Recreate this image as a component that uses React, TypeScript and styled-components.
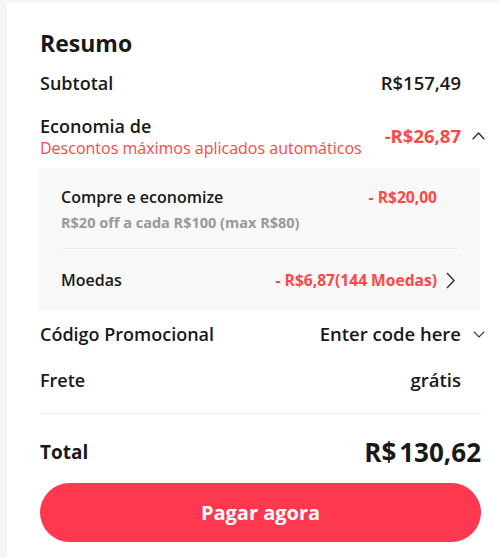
import React from "react";
import styled, { createGlobalStyle } from "styled-components";

const GlobalStyle = createGlobalStyle`
  html, body {
    margin: 0;
    padding: 0;
    background: #f5f5f5;
    font-family: "Open Sans", "Liberation Sans", sans-serif;
    color: #191919;
  }
`;

const Chevron = ({ dir }: { dir: "up" | "down" | "right" }) => {
  if (dir === "right") {
    return (
      <Icon width="9" height="17" viewBox="0 0 9 17">
        <path d="M1 1 L8 8.5 L1 16" fill="none" stroke="#333" strokeWidth="1.4" />
      </Icon>
    );
  }
  if (dir === "up") {
    return (
      <Icon width="13" height="8" viewBox="0 0 13 8">
        <path d="M0.7 7.3 L6.5 1 L12.3 7.3" fill="none" stroke="#333" strokeWidth="1.4" />
      </Icon>
    );
  }
  return (
    <Icon width="12" height="7" viewBox="0 0 12 7">
      <path d="M0.7 0.7 L6 6 L11.3 0.7" fill="none" stroke="#333" strokeWidth="1.2" />
    </Icon>
  );
};

function App() {
  return (
    <>
      <GlobalStyle />
      <Card>
        <Title>Resumo</Title>
        <Row $h={42}>
          <Label>Subtotal</Label>
          <Side>
            <Value>R$157,49</Value>
            <IconSlot />
          </Side>
        </Row>
        <Row $h={64}>
          <div>
            <Label>Economia de</Label>
            <Note>Descontos máximos aplicados automáticos</Note>
          </div>
          <Side>
            <Value $red>-R$26,87</Value>
            <IconSlot>
              <Chevron dir="up" />
            </IconSlot>
          </Side>
        </Row>
        <Details>
          <SubRow $h={81} $line>
            <div>
              <SubLabel>Compre e economize</SubLabel>
              <Hint>R$20 off a cada R$100 (max R$80)</Hint>
            </div>
            <Side $top>
              <SubValue>- R$20,00</SubValue>
              <SubSlot />
            </Side>
          </SubRow>
          <SubRow $h={62}>
            <SubLabel>Moedas</SubLabel>
            <Side>
              <SubValue>- R$6,87(144 Moedas)</SubValue>
              <SubSlot>
                <Chevron dir="right" />
              </SubSlot>
            </Side>
          </SubRow>
        </Details>
        <Row $h={46}>
          <Label>Código Promocional</Label>
          <Side>
            <Value>Enter code here</Value>
            <IconSlot>
              <Chevron dir="down" />
            </IconSlot>
          </Side>
        </Row>
        <Row $h={46} $line>
          <Label>Frete</Label>
          <Side>
            <Value>grátis</Value>
            <IconSlot />
          </Side>
        </Row>
        <TotalRow>
          <TotalLabel>Total</TotalLabel>
          <TotalValue>
            <span>R$</span>
            <span>130,62</span>
          </TotalValue>
        </TotalRow>
        <PayButton>Pagar agora</PayButton>
      </Card>
    </>
  );
}

export default App;

const Card = styled.div`
  margin: 3px 0 0 7px;
  background: #fff;
  padding: 23px 19px 16px 33px;
  min-height: 554px;
  box-sizing: border-box;
`;

const Title = styled.h2`
  margin: 0 0 2px;
  font-size: 23px;
  font-weight: 700;
  line-height: 34px;
`;

const Row = styled.div<{ $h: number; $line?: boolean }>`
  display: flex;
  justify-content: space-between;
  align-items: center;
  min-height: ${(p) => p.$h}px;
  padding-bottom: ${(p) => (p.$line ? "10px" : "0")};
  border-bottom: ${(p) => (p.$line ? "1px solid #ececec" : "none")};
`;

const Label = styled.div`
  font-size: 18px;
  font-weight: 600;
  line-height: 24px;
`;

const Note = styled.div`
  font-size: 16px;
  color: #ff4747;
  line-height: 20px;
`;

const Side = styled.div<{ $top?: boolean }>`
  display: flex;
  align-items: center;
  align-self: ${(p) => (p.$top ? "flex-start" : "center")};
`;

const Value = styled.div<{ $red?: boolean }>`
  font-size: 18.5px;
  font-weight: ${(p) => (p.$red ? 700 : 600)};
  color: ${(p) => (p.$red ? "#ff4747" : "#191919")};
  line-height: 24px;
`;

const IconSlot = styled.div`
  width: 24px;
  margin-right: -4px;
  display: flex;
  justify-content: flex-end;
  align-items: center;
`;

const Icon = styled.svg`
  display: block;
`;

const Details = styled.div`
  background: #f8f8f8;
  margin: 0 1px 0 -1px;
  padding: 0 22px;
`;

const SubRow = styled.div<{ $h: number; $line?: boolean }>`
  display: flex;
  justify-content: space-between;
  min-height: ${(p) => p.$h}px;
  box-sizing: border-box;
  padding-top: ${(p) => (p.$line ? "18px" : "0")};
  align-items: ${(p) => (p.$line ? "flex-start" : "center")};
  border-bottom: ${(p) => (p.$line ? "1px solid #ececec" : "none")};
`;

const SubLabel = styled.div`
  font-size: 16px;
  font-weight: 600;
  line-height: 22px;
`;

const Hint = styled.div`
  font-size: 14.5px;
  font-weight: 700;
  color: #999;
  line-height: 22px;
  margin-top: 4px;
`;

const SubValue = styled.div`
  font-size: 15.6px;
  font-weight: 700;
  color: #ff4747;
  line-height: 22px;
`;

const SubSlot = styled.div`
  width: 21px;
  padding-right: 3px;
  box-sizing: border-box;
  display: flex;
  justify-content: flex-end;
`;

const TotalRow = styled.div`
  display: flex;
  justify-content: space-between;
  align-items: center;
  height: 69px;
  padding-top: 6px;
  box-sizing: border-box;
`;

const TotalLabel = styled.div`
  font-size: 19px;
  font-weight: 700;
`;

const TotalValue = styled.div`
  display: flex;
  gap: 3px;
  font-size: 26px;
  font-weight: 700;
`;

const PayButton = styled.button`
  display: block;
  width: 100%;
  height: 59px;
  border: none;
  border-radius: 30px;
  background: #fd384f;
  color: #fff;
  font-family: "Open Sans", "Liberation Sans", sans-serif;
  font-size: 20px;
  font-weight: 700;
  cursor: pointer;
`;
